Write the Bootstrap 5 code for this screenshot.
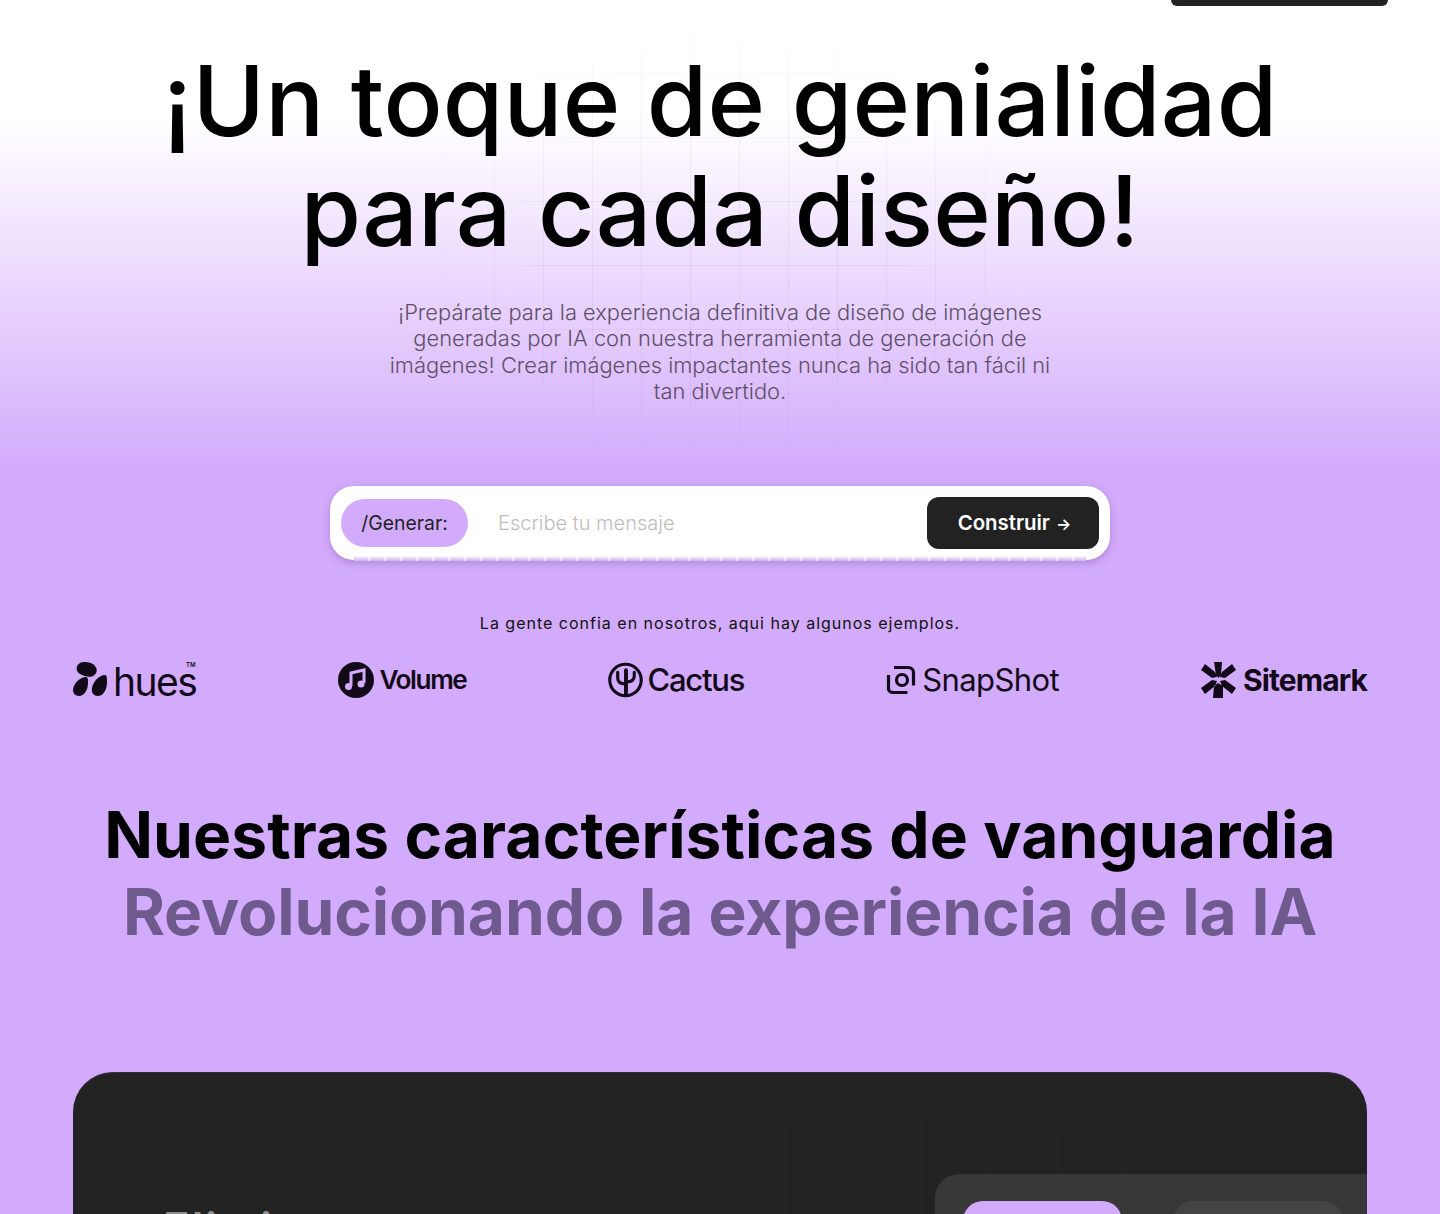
<!DOCTYPE html>
<html lang="es">
<head>
    <meta charset="UTF-8">
    <meta name="viewport" content="width=device-width, initial-scale=1.0">
    <title>Generador de imágenes IA</title>
    <link href="https://cdn.jsdelivr.net/npm/bootstrap@5.3.0/dist/css/bootstrap.min.css" rel="stylesheet">
    <style>
        html, body { height: 1214px; overflow: hidden; }
        body { font-family: "Inter", "Liberation Sans", sans-serif; color: #000;
            background: linear-gradient(180deg, #fff 0, #fff 120px, #d3abfc 470px, #d3abfc 100%); }
        .page-wrap { position: relative; height: 1214px; overflow: hidden; }
        .grid-layer { position: absolute; left: 396px; top: 0; width: 650px; height: 480px; pointer-events: none;
            background-image: linear-gradient(to right, rgba(60,30,90,.06) 1px, transparent 1px), linear-gradient(to bottom, rgba(60,30,90,.05) 1px, transparent 1px);
            background-size: 49px 64px; background-position: 0 9px;
            -webkit-mask-image: radial-gradient(closest-side, #000 55%, transparent); mask-image: radial-gradient(closest-side, #000 55%, transparent); }
        .top-btn { width: 217px; height: 6px; margin-right: 52px; background: #222; border-radius: 0 0 10px 10px; }
        .hero-title { font-weight: 500; font-size: 98px; line-height: 110px; margin: 40px 0 0; letter-spacing: .2px; position: relative; }
        .hero-sub { width: 680px; margin: 33px auto 0; font-size: 21.86px; line-height: 26.4px; color: #5f4f6b; font-weight: 300; position: relative; }
        .gen-bar { position: relative; width: 780px; height: 74px; margin: 81px auto 0; padding: 11px; background: #fff; border-radius: 24px; box-shadow: 0 3px 8px rgba(70,30,110,.25); }
        .gen-bar::after { content: ""; position: absolute; left: 24px; right: 24px; bottom: -1px; height: 5px;
            background: repeating-linear-gradient(90deg, transparent 0, transparent 14px, rgba(255,255,255,.6) 14px, rgba(255,255,255,.6) 16px), linear-gradient(180deg, #fbf8fe, #cfb2ec); }
        .gen-tag { width: 127px; height: 48px; padding-top: 2px; background: #d3abfc; border-radius: 24px; font-size: 19.4px; color: #222; }
        .gen-input { border: 0; outline: 0; background: transparent; font-size: 20px; font-weight: 300; padding: 0 0 0 30px; color: #222; min-width: 0; }
        .gen-input::placeholder { color: #bdbdbd; }
        .gen-btn { width: 172px; height: 52px; background: #222; color: #fff; border: 0; border-radius: 12px; font-weight: 600; font-size: 20.4px; padding: 2px 0 0 3px; }
        .btn-arrow { font-size: 16px; margin-left: 1px; }
        .trust-line { font-size: 16px; letter-spacing: 1px; line-height: 20px; margin: 53px 0 0; color: #111; }
        .logo-row { margin: 25px 73px 0; height: 44px; }
        .logo-item { color: #120a18; line-height: 1; }
        .logo-hues { position: relative; top: 2px; font-size: 39px; font-weight: 400; letter-spacing: -1.5px; }
        .logo-tm { position: absolute; right: 1px; top: 0; font-size: 6px; letter-spacing: 0; font-weight: 600; }
        .logo-vol { font-size: 26.2px; font-weight: 600; letter-spacing: -1.4px; }
        .logo-cac { font-size: 31px; font-weight: 500; letter-spacing: -1.2px; }
        .logo-snap { font-size: 31px; font-weight: 400; letter-spacing: -.6px; }
        .logo-site { font-size: 30px; font-weight: 700; letter-spacing: -.9px; }
        .feat-title { font-size: 64px; line-height: 77px; font-weight: 700; letter-spacing: .1px; margin: 94px 0 0; }
        .feat-title span { display: block; color: #6f5a8e; letter-spacing: -.1px; }
        .dark-panel { position: relative; height: 300px; margin: 122px 73px 0; background: #222; border-radius: 40px; overflow: hidden; border-top: 1px solid #3b2b47; }
        .dark-grid { position: absolute; left: 372px; top: 0; width: 900px; height: 200px;
            background-image: linear-gradient(to right, rgba(255,255,255,.025) 1px, transparent 1px), linear-gradient(to bottom, rgba(255,255,255,.025) 1px, transparent 1px);
            background-size: 68px 68px; background-position: 0 8px;
            -webkit-mask-image: radial-gradient(closest-side, #000 50%, transparent); mask-image: radial-gradient(closest-side, #000 50%, transparent); }
        .dark-head { padding: 133px 0 0 90px; font-size: 44px; font-weight: 600; letter-spacing: 2px; line-height: 1; color: #8f8f8f; }
        .side-panel { position: absolute; left: 862px; top: 101px; width: 440px; height: 200px; padding: 27px 28px; background: #383838; border-radius: 24px 0 0 0; gap: 51px; }
        .side-pill { width: 159px; height: 60px; background: #d3abfc; border-radius: 20px; }
        .side-pill.dim { width: 170px; background: #444; }
        .gap-logo-xs { gap: 4px; }
        .gap-logo-sm { gap: 5px; }
        .gap-logo-md { gap: 6px; }
        .gap-logo-lg { gap: 7px; }
    </style>
</head>
<body>
    <div class="page-wrap">
        <div class="grid-layer"></div>
        <div class="d-flex justify-content-end">
            <div class="top-btn"></div>
        </div>
        <h1 class="hero-title text-center">¡Un toque de genialidad<br>para cada diseño!</h1>
        <p class="hero-sub text-center">¡Prepárate para la experiencia definitiva de diseño de imágenes generadas por IA con nuestra herramienta de generación de imágenes! Crear imágenes impactantes nunca ha sido tan fácil ni tan divertido.</p>

        <form class="gen-bar d-flex align-items-center" onsubmit="return false">
            <div class="gen-tag d-flex align-items-center justify-content-center flex-shrink-0">/Generar:</div>
            <input class="gen-input flex-grow-1" type="text" placeholder="Escribe tu mensaje">
            <button class="gen-btn flex-shrink-0" type="button">Construir <span class="btn-arrow">→</span></button>
        </form>

        <p class="trust-line text-center">La gente confia en nosotros, aqui hay algunos ejemplos.</p>

        <div class="logo-row d-flex justify-content-between align-items-center">
            <div class="logo-item d-flex align-items-center gap-logo-sm">
                <svg width="35" height="35" viewBox="0 0 35 35" fill="#120a18"><path d="M7 1c4-2 12-1 15 3 3 4 2 8-2 10-4 2-9 0-13-2C3 10 2 4 7 1z"/><path d="M13 15c2 0 2 3 2 6 0 7-4 13-9 13-4 0-6-3-6-6 0-6 7-13 13-13z"/><path d="M32 13c2 0 2 3 2 7 0 8-4 14-9 14-4 0-7-3-6-8 1-6 7-13 13-13z"/></svg>
                <span class="logo-hues">hues<span class="logo-tm">TM</span></span>
            </div>
            <div class="logo-item d-flex align-items-center gap-logo-sm">
                <svg width="36" height="36" viewBox="0 0 36 36"><circle cx="18" cy="18" r="18" fill="#120a18"/><path d="M13 24V11l13-3v13" fill="none" stroke="#d3abfc" stroke-width="3"/><circle cx="10.500" cy="24.500" r="3.500" fill="#d3abfc"/><circle cx="23" cy="22" r="3.500" fill="#d3abfc"/></svg>
                <span class="logo-vol">Volume</span>
            </div>
            <div class="logo-item d-flex align-items-center gap-logo-xs">
                <svg width="35" height="36" viewBox="0 0 36 36" fill="none" stroke="#120a18" stroke-width="3.200"><circle cx="18" cy="18" r="16.200"/><path d="M18.500 33V8" stroke-width="4" stroke-linecap="round"/><path d="M10 10v6c0 4 3 6 8 6M27 10v4c0 4-3 6-8 6" stroke-linecap="round"/></svg>
                <span class="logo-cac">Cactus</span>
            </div>
            <div class="logo-item d-flex align-items-center gap-logo-md">
                <svg width="30" height="30" viewBox="0 0 30 30" fill="none" stroke="#120a18" stroke-width="3.200"><path d="M8 2.500h14c3 0 5.500 2 5.500 5v13"/><path d="M2.500 10v14c0 2 2 3.500 5 3.500h14"/><circle cx="16" cy="15" r="5.500"/></svg>
                <span class="logo-snap">SnapShot</span>
            </div>
            <div class="logo-item d-flex align-items-center gap-logo-lg">
                <svg width="35" height="36" viewBox="0 0 35 36" fill="#120a18"><path d="M13 0h8l-1 13-2.500 3-2.500-3zM12 36l1-12 4-3 5 3v12zM0 8l4-6 10 8 2 5-5 1zM35 8l-4-6-10 8-2 5 5 1zM0 26l4 6 10-8 2-5-5-1zM35 26l-4 6-10-8-2-5 5-1z"/></svg>
                <span class="logo-site">Sitemark</span>
            </div>
        </div>

        <h2 class="feat-title text-center">Nuestras características de vanguardia<span>Revolucionando la experiencia de la IA</span></h2>

        <div class="dark-panel">
            <div class="dark-grid"></div>
            <div class="dark-head">Eliminar</div>
            <div class="side-panel d-flex">
                <div class="side-pill"></div>
                <div class="side-pill dim"></div>
            </div>
        </div>
    </div>
    <script src="https://cdn.jsdelivr.net/npm/bootstrap@5.3.0/dist/js/bootstrap.bundle.min.js"></script>
</body>
</html>
